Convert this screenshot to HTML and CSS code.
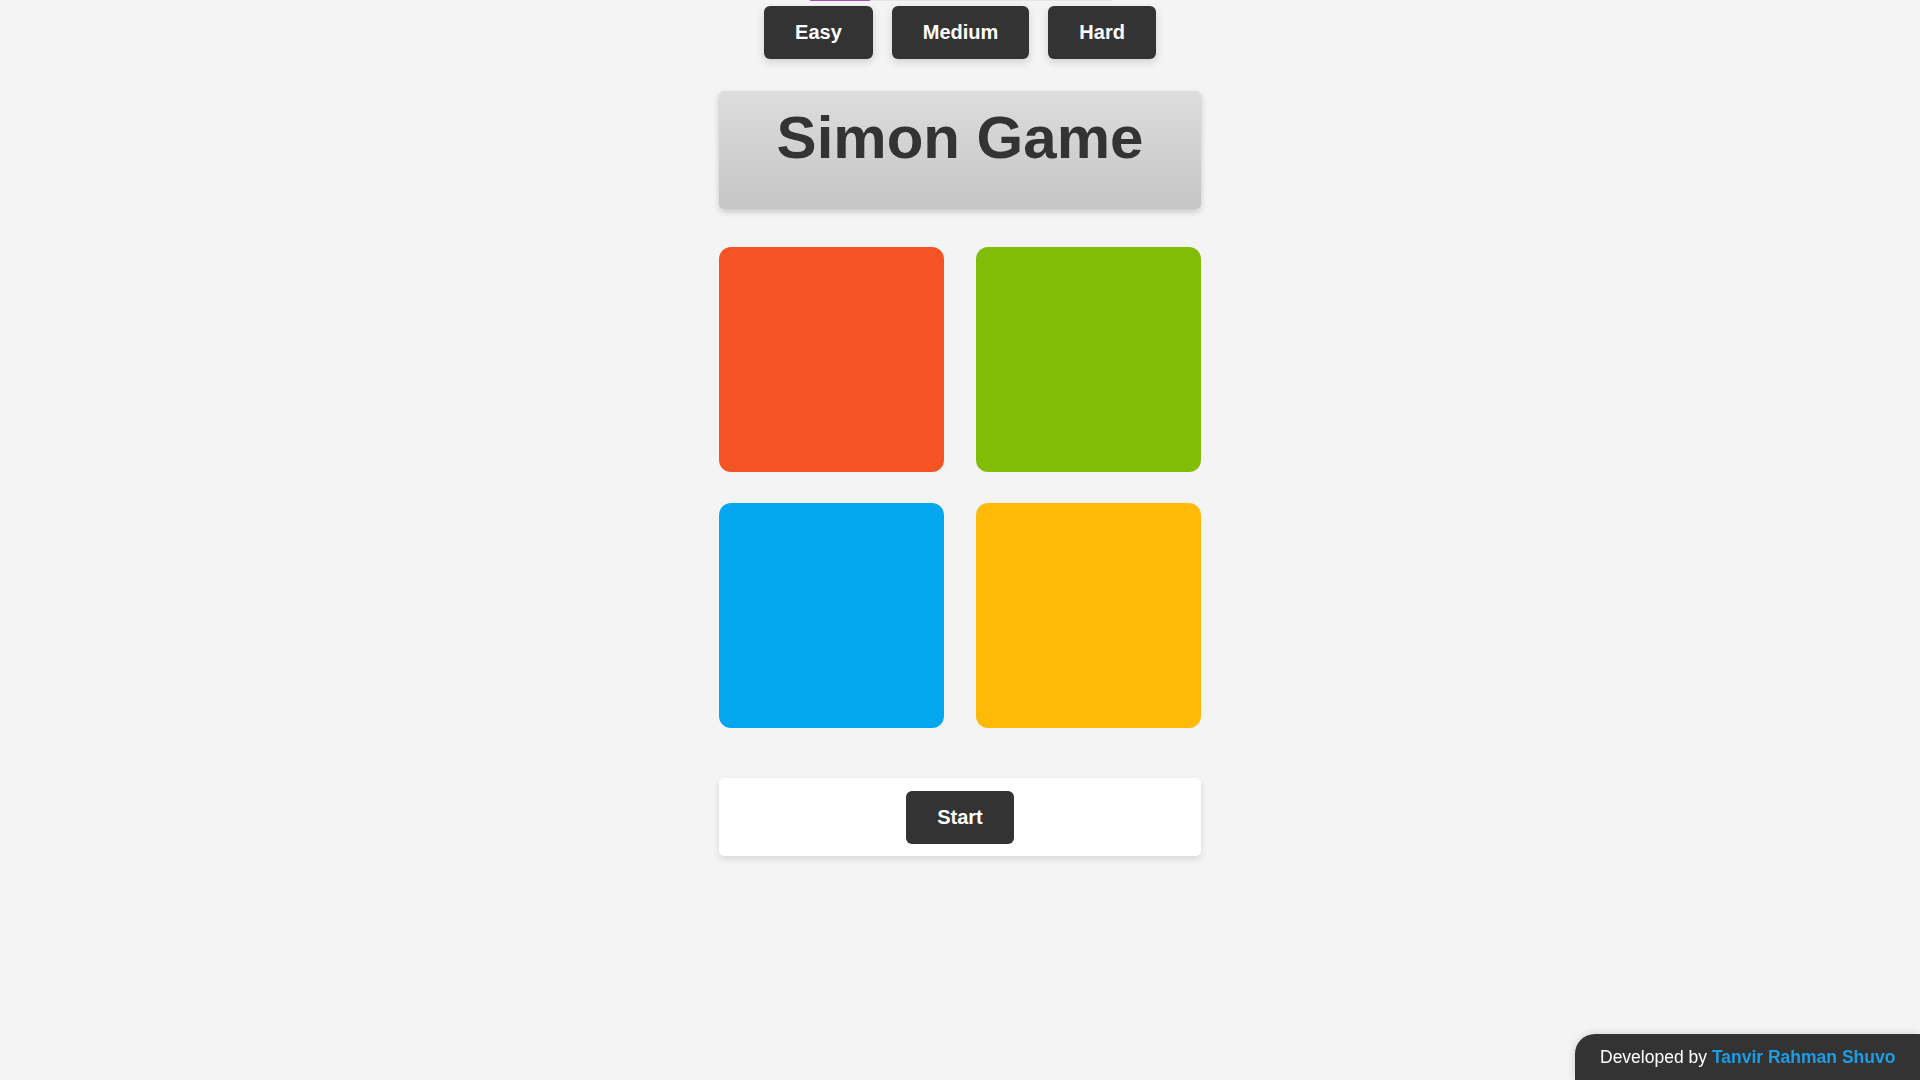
FILE: index.html
```html
<!DOCTYPE html>
<html lang="en">
<head>
<meta charset="UTF-8">
<title>Simon Game</title>
<link rel="stylesheet" href="styles.css">
</head>
<body>
  <div class="progress"><div class="progress-fill"></div></div>
  <div class="levels">
    <button class="btn">Easy</button>
    <button class="btn">Medium</button>
    <button class="btn">Hard</button>
  </div>
  <main class="game">
    <h1 class="title">Simon Game</h1>
    <div class="board">
      <div class="pad red"></div>
      <div class="pad green"></div>
      <div class="pad blue"></div>
      <div class="pad yellow"></div>
    </div>
    <div class="controls">
      <button class="btn">Start</button>
    </div>
  </main>
  <footer class="credit">Developed by <a href="#" class="author">Tanvir Rahman Shuvo</a></footer>
</body>
</html>
```
FILE: styles.css
```css
* { box-sizing: border-box; }
html, body { height: 100%; }
body {
  margin: 0;
  background: #f4f4f4;
  font-family: "Liberation Sans", Arial, sans-serif;
  color: #333;
  overflow: hidden;
}
.progress {
  width: 301px;
  height: 1px;
  margin: 0 auto;
  background: #e4e4e4;
}
.progress-fill {
  width: 60px;
  height: 1px;
  background: #b04ac0;
}
.levels {
  display: flex;
  justify-content: center;
  gap: 19px;
  margin-top: 5px;
}
.btn {
  font-family: "Liberation Sans", Arial, sans-serif;
  font-size: 20px;
  font-weight: bold;
  line-height: 23px;
  color: #fff;
  background: #333;
  border: none;
  border-radius: 6px;
  padding: 15px 31px;
  box-shadow: 0 3px 8px rgba(0,0,0,0.15);
  cursor: pointer;
}
.game {
  width: 482px;
  margin: 32px auto 0;
}
.title {
  margin: 0;
  padding: 12px 0 37px;
  text-align: center;
  font-size: 60px;
  line-height: 69px;
  font-weight: bold;
  color: #333;
  background: linear-gradient(to bottom, #dddddd, #c5c5c5);
  border-radius: 5px;
  box-shadow: 0 3px 6px rgba(0,0,0,0.18);
}
.board {
  display: grid;
  grid-template-columns: 225px 225px;
  column-gap: 32px;
  row-gap: 31px;
  margin-top: 38px;
}
.pad {
  width: 225px;
  height: 225px;
  border-radius: 12px;
}
.red { background: #f35325; }
.green { background: #81bc06; }
.blue { background: #05a6f0; }
.yellow { background: #ffba08; }
.controls {
  margin-top: 50px;
  background: #fff;
  border-radius: 5px;
  padding: 13px 0 12px;
  display: flex;
  justify-content: center;
  box-shadow: 0 3px 6px rgba(0,0,0,0.12);
}
.controls .btn { box-shadow: none; }
.credit {
  position: fixed;
  right: 0;
  bottom: 0;
  width: 345px;
  height: 46px;
  padding: 13px 0 0 25px;
  background: #333;
  color: #fff;
  font-size: 17.5px;
  line-height: 20px;
  border-top-left-radius: 20px;
  box-shadow: 0 0 8px rgba(0,0,0,0.15);
  white-space: nowrap;
}
.author {
  color: #1b9ce5;
  font-weight: bold;
  text-decoration: none;
}
```
